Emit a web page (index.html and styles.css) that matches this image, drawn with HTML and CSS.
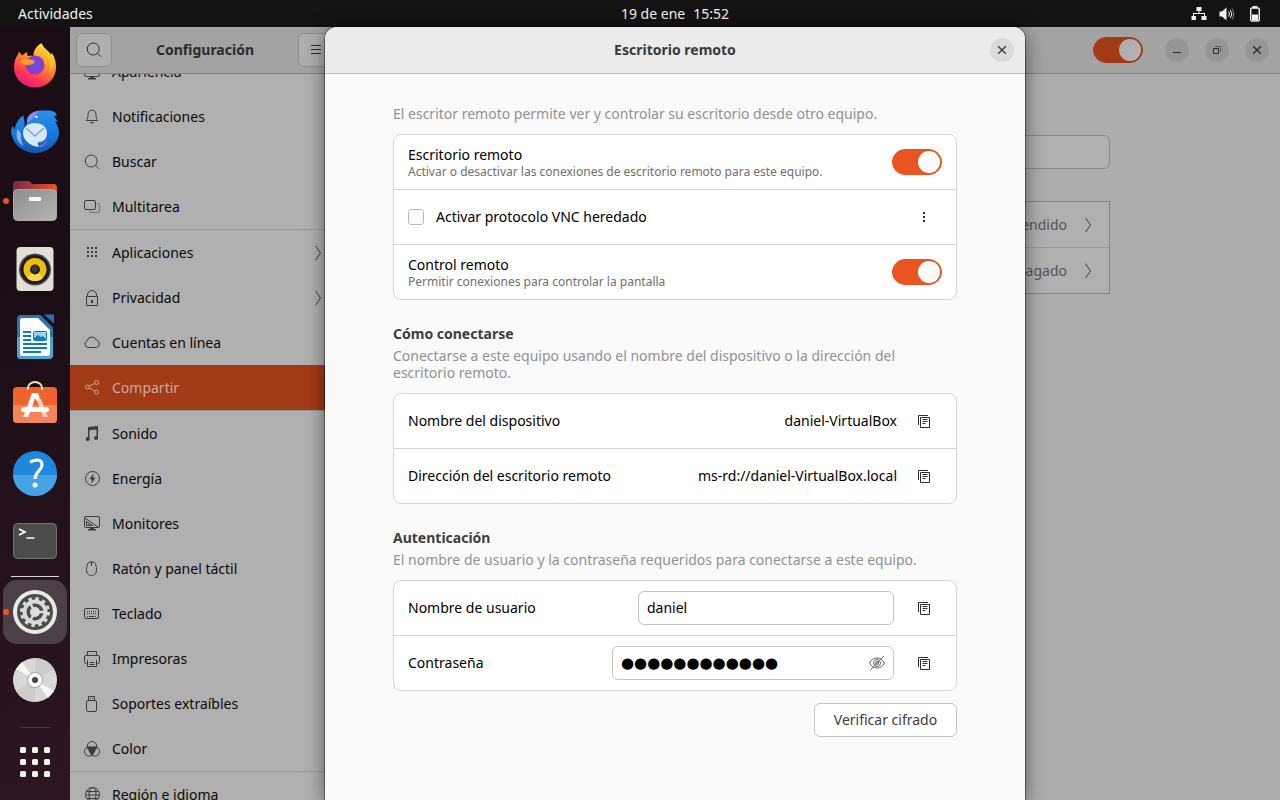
FILE: index.html
```html
<!DOCTYPE html>
<html lang="es">
<head>
<meta charset="utf-8">
<title>Configuración</title>
<link rel="stylesheet" href="styles.css">
</head>
<body>
<svg class="defs" aria-hidden="true">
  <symbol id="i-search" viewBox="0 0 16 16"><circle cx="7.2" cy="7" r="6"/><path d="M11.4 11.2l3.6 3.6"/></symbol>
  <symbol id="i-chevron" viewBox="0 0 8 16"><path d="M1.500 .8L6.500 8l-5 7.200"/></symbol>
  <symbol id="i-close" viewBox="0 0 16 16"><path stroke-width="1.400" d="M4.200 4.200l7.600 7.600M11.800 4.200l-7.600 7.600"/></symbol>
  <symbol id="i-copy" viewBox="0 0 16 16"><path d="M2.500 12V2.500H12M4.500 4.500h9v10h-9zM6.500 6.500h5M6.500 8.500h5M6.500 10.500h3"/></symbol>
</svg>

<header class="topbar">
  <button class="activities">Actividades</button>
  <button class="clock"><span>19 de ene</span><span>15:52</span></button>
  <div class="tray">
    <svg class="icon tray-icon" viewBox="0 0 16 16"><path class="fill" d="M5.500 1h5v4h-2v2H14v3h1.500v4h-5v-4H13V8H3v2h2v4H.500v-4H2V7h5.500V5h-2z"/></svg>
    <svg class="icon tray-icon" viewBox="0 0 16 16"><path class="fill" d="M.5 5.500h2.500L7.500 1.500v13L3 10.500H.500z"/><path d="M9.500 5.500q2 2.500 0 5M11.300 4q3 4 0 8"/><path class="faint" d="M13 2.500q3.500 5.500 0 11"/></svg>
    <svg class="icon tray-icon" viewBox="0 0 16 16"><rect class="bold-stroke" x="3.700" y="2" width="8.600" height="13" rx="1.500"/><path class="fill" d="M5.500 0h5v2h-5zM5 8.500h6V14H5z"/></svg>
  </div>
</header>

<main class="desktop">
  <nav class="dock" aria-label="Aplicaciones favoritas">
    <div class="dock-apps">
      <button class="app" aria-label="Firefox">
        <svg viewBox="0 0 48 48"><defs><linearGradient id="fx" x1=".8" y1="0" x2=".3" y2="1"><stop offset="0" stop-color="#fff14a"/><stop offset=".4" stop-color="#ff9a26"/><stop offset=".75" stop-color="#ff3a4e"/><stop offset="1" stop-color="#e5188a"/></linearGradient><radialGradient id="fp"><stop offset="0" stop-color="#5b58d8"/><stop offset="1" stop-color="#9238d0"/></radialGradient></defs>
        <path fill="url(#fx)" d="M30.500 2c1 3 4 6 7 8.500l2.500 3 1-1.500c3 5 4 9 4 14.500a21 20 0 0 1-42 0c0-5 1.500-10 4-13l1-3 3 4 5-3.500.5 4c2.500-.500 4-.500 6 0 0-6 3-10 8-13z"/><path fill="#ffc22b" d="M33 14c6 4 8 10 5 16 4-3 5-9 3-14l-8-8z"/><circle cx="24" cy="24" r="9.500" fill="url(#fp)"/><path fill="#ff9f20" d="M9 20c4-3 9-2 15 0-1 3-4 4-7 4-3 0-5-1-8-4z"/></svg>
      </button>
      <button class="app" aria-label="Thunderbird">
        <svg viewBox="0 0 48 48"><defs><linearGradient id="tb" x1="0" y1="0" x2="0" y2="1"><stop offset="0" stop-color="#2e8cf0"/><stop offset=".6" stop-color="#1479dc"/><stop offset="1" stop-color="#1454a8"/></linearGradient></defs>
        <path fill="url(#tb)" d="M17 12c2-7 7-10.500 13-10.500 5 0 9-.5 14 1.500l2 3.500-3 .5 4 6-3-1c3 5 4 9 4 13a24 22.500 0 0 1-47 2C-.5 23 0 19 2 17l1.500 4c1-6 4-12 9-14.500 0 4 2.500 8 .5 13z"/><path fill="#8b8cf5" d="M16 14c-1-6 4-12 12-12-4 3-4 8-12 12z"/><path fill="#8fb5f5" d="M7 20c-3 6-1 13 5 17-1-4-3-7-2-12z"/><circle cx="25.500" cy="8" r="1.300" fill="#fff"/><path fill="#6c63e0" d="M36 29c-1 4-4 7-8 7l1 3c5-1 8-5 7-10z"/><path fill="#d7e9fa" d="M24 14c7 0 12 4 12 10s-4 9-8 9c-2 1-1 3 0 5-9-1-16-7-16-14 0-6 5-10 12-10z"/><path fill="none" stroke="#7ea8cf" stroke-width="1.500" d="M15 19l9 8 9-8"/></svg>
      </button>
      <button class="app running" aria-label="Archivos">
        <svg viewBox="0 0 48 48"><defs><linearGradient id="fo" x1="0" x2="1"><stop offset="0" stop-color="#762a50"/><stop offset="1" stop-color="#e95420"/></linearGradient><linearGradient id="fg" x1="0" y1="0" x2="1" y2="1"><stop offset="0" stop-color="#8d8d8d"/><stop offset="1" stop-color="#b5b5b5"/></linearGradient></defs><path fill="url(#fo)" d="M2 8q0-4 4-4h11q2 0 3 2l1 1h22q3 0 3 4v8H2z"/><rect x="2.500" y="12.500" width="43" height="31" rx="4" fill="url(#fg)" stroke="#aaa"/><rect x="18" y="20" width="12" height="4" rx="1" fill="#f7f7f7"/></svg>
      </button>
      <button class="app" aria-label="Rhythmbox">
        <svg viewBox="0 0 48 48"><rect x="5.500" y="2" width="37" height="44" rx="4" fill="#e2dfd4"/><circle cx="24" cy="24.500" r="16" fill="#4a4954"/><circle cx="24" cy="24.500" r="14.500" fill="#1d1c26"/><circle cx="24" cy="24.500" r="11.500" fill="#f1bc10"/><path fill="#ffd84a" d="M16 32.700a11.500 11.500 0 0 0 16 0L24 24.500z"/><circle cx="24" cy="24.500" r="5" fill="#222"/><circle cx="24" cy="24" r="3" fill="#3a3a3a"/></svg>
      </button>
      <button class="app" aria-label="LibreOffice Writer">
        <svg viewBox="0 0 48 48"><path fill="#2377b4" d="M9.500 2h20L42 14.500V42q0 4-4 4H10q-4 0-4-4V6q0-4 3.500-4z"/><path fill="#49a5d5" d="M6 24h36v18q0 4-4 4H10q-4 0-4-4z"/><path fill="#fff" d="M11 5h16l12 12v24q0 2-2 2H11q-2 0-2-2V7q0-2 2-2z"/><path fill="#1f76b2" d="M33 1.500h10v9z"/><path fill="none" stroke="#0e7cc0" stroke-width="2" d="M12 19h8M12 23h8M12 27h8M12 31h24M12 35h24M12 39h18"/><rect x="22.500" y="18.500" width="13" height="9" rx="1" fill="#9bd0ef" stroke="#0e7cc0"/><path fill="#0e7cc0" d="M23 27v-2l4-3 3 2 2-1 3 3v1z"/></svg>
      </button>
      <button class="app" aria-label="Ubuntu Software">
        <svg viewBox="0 0 48 48"><rect x="2" y="6" width="44" height="36" rx="4" fill="#f0632c"/><path fill="#f3855a" d="M2 24h44v14q0 4-4 4H6q-4 0-4-4z"/><path fill="none" stroke="#fbdcae" stroke-width="2" d="M17 9V7a7 6 0 0 1 14 0v2"/><path fill="#fff" d="M21 12h6l2 6-3.500 2L24 17l-3 9h-5z"/><path fill="#f9d5c6" d="M26 19l4-1 7 18h-5z"/><path fill="#fff" d="M14 31h5l-2 5h-5z"/><rect x="10" y="26" width="28" height="5" rx="2.500" fill="#fff"/></svg>
      </button>
      <button class="app" aria-label="Ayuda">
        <svg viewBox="0 0 48 48"><circle cx="24" cy="24" r="22" fill="#2088dc"/><path fill="#46a4e6" d="M2 26a22 21 0 0 0 44 0z"/><path fill="none" stroke="#fff" stroke-width="3" d="M19 13q12-5 12 3c0 6-7 6-7 14"/><circle cx="24" cy="36" r="2.500" fill="#fff"/></svg>
      </button>
      <button class="app" aria-label="Terminal">
        <svg viewBox="0 0 48 48"><rect x="2.500" y="6.500" width="43" height="35" rx="4" fill="#4b4b4b" stroke="#737373"/><path fill="none" stroke="#fff" stroke-width="1.700" d="M8 12l6 3-6 3M15.500 21h8"/></svg>
      </button>
      <hr class="dock-line">
      <button class="app running active" aria-label="Configuración">
        <svg viewBox="0 0 48 48"><circle cx="24" cy="24" r="22" fill="#e9e9e9"/><circle cx="24" cy="24" r="18" fill="#4b4b4b"/><circle cx="24" cy="24" r="13.500" fill="none" stroke="#dadada" stroke-width="3" stroke-dasharray="3.534 3.534"/><circle cx="24" cy="24" r="10.500" fill="none" stroke="#dadada" stroke-width="4"/><path stroke="#dadada" stroke-width="2.500" d="M24 24h10M24 24l-5-9M24 24l-5 9"/><circle cx="24" cy="24" r="5" fill="#dedede"/></svg>
      </button>
      <button class="app" aria-label="Disco óptico">
        <svg viewBox="0 0 48 48"><circle cx="24" cy="24" r="22" fill="#d8d8d8"/><path fill="#cccccc" d="M24 24V2a22 22 0 0 1 19 11zM24 24v22a22 22 0 0 1-19-11z"/><path fill="#f7f7f7" d="M24 24L5 13l6-7zM24 24l19 11-6 7z"/><circle cx="24" cy="24" r="7.500" fill="#f8f8f8" stroke="#aaa18f"/><circle cx="24" cy="24" r="3" fill="#444"/></svg>
      </button>
      <button class="app" aria-label="Papelera">
        <svg viewBox="0 0 48 48"><rect x="7" y="3" width="34" height="43" rx="4" fill="#4a3843"/></svg>
      </button>
    </div>
    <button class="app" aria-label="Mostrar aplicaciones">
      <svg viewBox="0 0 48 48"><g fill="#f2f2f0"><rect x="9" y="9" width="6" height="6" rx="1.500"/><rect x="21" y="9" width="6" height="6" rx="1.500"/><rect x="33" y="9" width="6" height="6" rx="1.500"/><rect x="9" y="21" width="6" height="6" rx="1.500"/><rect x="21" y="21" width="6" height="6" rx="1.500"/><rect x="33" y="21" width="6" height="6" rx="1.500"/><rect x="9" y="33" width="6" height="6" rx="1.500"/><rect x="21" y="33" width="6" height="6" rx="1.500"/><rect x="33" y="33" width="6" height="6" rx="1.500"/></g></svg>
    </button>
  </nav>

  <div class="workspace">
    <section class="window">
      <aside class="sidebar">
        <header class="bar side-bar">
          <button class="tool" aria-label="Buscar"><svg class="icon"><use href="#i-search"/></svg></button>
          <h1 class="title">Configuración</h1>
          <button class="tool" aria-label="Menú"><svg class="icon" viewBox="0 0 16 16"><path d="M3 3.500h10M3 7.500h10M3 11.500h10"/></svg></button>
        </header>
        <div class="scroller">
          <ul class="panels">
            <li><a class="panel" href="#"><svg class="icon" viewBox="0 0 16 16"><rect x=".5" y="2.500" width="15" height="10" rx="1.500"/><path class="fill" d="M6 12h4v2h2v1.500H4V14h2z"/></svg>Apariencia</a></li>
            <li><a class="panel" href="#"><svg class="icon" viewBox="0 0 16 16"><path d="M8 1.200c-2.500 0-4 2-4 4.300 0 3-.5 4.500-1.800 6h11.600C12.500 10 12 8.500 12 5.500c0-2.300-1.500-4.300-4-4.300z"/><path class="fill" d="M6 13h4q-2 3-4 0z"/></svg>Notificaciones</a></li>
            <li><a class="panel" href="#"><svg class="icon"><use href="#i-search"/></svg>Buscar</a></li>
            <li><a class="panel" href="#"><svg class="icon" viewBox="0 0 16 16"><rect x=".5" y="1.500" width="11" height="9" rx="1.500"/><path class="faint" d="M13 4.500h1q1.500 0 1.500 1.500v6q0 1.500-1.500 1.500H7q-1.500 0-1.500-1.500"/></svg>Multitarea</a></li>
            <li class="group"><a class="panel" href="#"><svg class="icon" viewBox="0 0 16 16"><path class="fill" d="M3 2h2v2H3zM7 2h2v2H7zM11 2h2v2h-2zM3 6h2v2H3zM7 6h2v2H7zM11 6h2v2h-2zM3 10h2v2H3zM7 10h2v2H7zM11 10h2v2h-2z"/></svg>Aplicaciones<svg class="chevron"><use href="#i-chevron"/></svg></a></li>
            <li><a class="panel" href="#"><svg class="icon" viewBox="0 0 16 16"><path d="M2.500 6.500h11v9h-11zM3.500 6.500V5a4.500 4.500 0 0 1 9 0v1.500"/><path class="fill" d="M7 10h2v3H7z"/></svg>Privacidad<svg class="chevron"><use href="#i-chevron"/></svg></a></li>
            <li><a class="panel" href="#"><svg class="icon" viewBox="0 0 16 16"><path d="M4 12.500a3.500 3.500 0 0 1-.8-6.700 4.700 4.700 0 0 1 9-.8 3.800 3.800 0 0 1 0 7.500z"/></svg>Cuentas en línea</a></li>
            <li><a class="panel selected" href="#" aria-current="page"><svg class="icon" viewBox="0 0 16 16"><circle cx="3.500" cy="7" r="2"/><circle cx="12.500" cy="2.500" r="2"/><circle cx="12.500" cy="12" r="2"/><path d="M5.400 6.200l5.200-2.800M5.400 8l5.200 3"/></svg>Compartir</a></li>
            <li class="group"><a class="panel" href="#"><svg class="icon" viewBox="0 0 16 16"><path class="fill" d="M4 1L14 0v12h-1.500V3.500L5.500 4.200V13.500H4z"/><circle class="fill" cx="3.700" cy="13" r="2"/><circle class="fill" cx="12" cy="12" r="2"/></svg>Sonido</a></li>
            <li><a class="panel" href="#"><svg class="icon" viewBox="0 0 16 16"><circle cx="8.500" cy="7.500" r="7"/><path class="fill" d="M9.500 2.500L5.500 8.300h2.400l-.5 4.200 4-5.800H9z"/></svg>Energía</a></li>
            <li><a class="panel" href="#"><svg class="icon" viewBox="0 0 16 16"><rect x=".5" y=".5" width="15" height="11" rx="1.500"/><path d="M1 2l13 9M2.500 5.500v4h6zM4 8h1.500"/><path class="fill" d="M6 11.500h4V13h2v1.500H4V13h2z"/></svg>Monitores</a></li>
            <li><a class="panel" href="#"><svg class="icon" viewBox="0 0 16 16"><path d="M4.500 1.500q3-1.500 6 0c1 1 2 4 2 7 0 4-2 6-5 6s-5-2-5-6c0-3 1-6 2-7zM7.500 1v4"/></svg>Ratón y panel táctil</a></li>
            <li><a class="panel" href="#"><svg class="icon" viewBox="0 0 16 16"><rect x=".5" y="2.500" width="14" height="10" rx="1.500"/><path class="dots" d="M3 5.500h10M3 7.500h10"/><path d="M3 10.500h1M5 10.500h5M11 10.500h1"/></svg>Teclado</a></li>
            <li><a class="panel" href="#"><svg class="icon" viewBox="0 0 16 16"><path d="M3.500 4V.5h9V4M3.500 12.500h-1q-2 0-2-2V6q0-1.500 1.500-1.500h12q1.500 0 1.500 1.500v4.500q0 2-2 2h-1M3.500 9v6.500h9V9M5.500 11.500h5M5.500 13.500h5"/></svg>Impresoras</a></li>
            <li><a class="panel" href="#"><svg class="icon" viewBox="0 0 16 16"><rect x="2.500" y="4.500" width="10" height="11" rx="1.500"/><path d="M4.500 4V.5h6V4M6 2.500h1M8 2.500h1"/></svg>Soportes extraíbles</a></li>
            <li><a class="panel" href="#"><svg class="icon" viewBox="0 0 16 16"><circle cx="8" cy="5.200" r="4.700"/><circle cx="5.200" cy="10.500" r="4.700"/><circle cx="10.800" cy="10.500" r="4.700"/><path class="fill" d="M3.500 6.500Q8 4.500 12.500 6.500L11 10.500 8 14l-3-3.500z"/></svg>Color</a></li>
            <li class="group"><a class="panel" href="#"><svg class="icon" viewBox="0 0 16 16"><circle cx="8.500" cy="7.500" r="7"/><ellipse cx="8.500" cy="7.500" rx="3.500" ry="7"/><path d="M2.500 4.500h12M1.500 8h14M2.500 11.500h12"/></svg>Región e idioma</a></li>
          </ul>
        </div>
      </aside>

      <div class="content">
        <header class="bar content-bar">
          <input class="switch" type="checkbox" role="switch" checked aria-label="Compartir">
          <div class="window-controls">
            <button class="round" aria-label="Minimizar"><svg class="icon" viewBox="0 0 16 16"><path d="M4 10.500h8"/></svg></button>
            <button class="round" aria-label="Restaurar"><svg class="icon" viewBox="0 0 16 16"><path d="M4.500 6.500h5v5h-5z"/><path class="faint" d="M6 4.500h5.500V10"/></svg></button>
            <button class="round" aria-label="Cerrar"><svg class="icon"><use href="#i-close"/></svg></button>
          </div>
        </header>
        <div class="sharing">
          <input class="device-name" type="text" aria-label="Nombre del equipo">
          <ul class="services">
            <li><a class="service" href="#">Encendido<svg class="chevron"><use href="#i-chevron"/></svg></a></li>
            <li><a class="service" href="#">Apagado<svg class="chevron"><use href="#i-chevron"/></svg></a></li>
          </ul>
        </div>
      </div>
    </section>

    <section class="dialog" role="dialog" aria-labelledby="dialog-title">
      <header class="bar dialog-bar">
        <h2 class="title" id="dialog-title">Escritorio remoto</h2>
        <button class="round" aria-label="Cerrar"><svg class="icon"><use href="#i-close"/></svg></button>
      </header>
      <div class="dialog-body">
        <section class="block">
          <p class="hint">El escritor remoto permite ver y controlar su escritorio desde otro equipo.</p>
          <div class="card">
            <div class="row">
              <label class="row-text" for="rd">Escritorio remoto<small>Activar o desactivar las conexiones de escritorio remoto para este equipo.</small></label>
              <input class="switch" id="rd" type="checkbox" role="switch" checked>
            </div>
            <div class="row">
              <label class="row-check"><input class="check" type="checkbox">Activar protocolo VNC heredado</label>
              <button class="ghost" aria-label="Más opciones"><svg class="icon" viewBox="0 0 16 16"><path class="fill" d="M7 3h2v2H7zM7 7h2v2H7zM7 11h2v2H7z"/></svg></button>
            </div>
            <div class="row">
              <label class="row-text" for="rc">Control remoto<small>Permitir conexiones para controlar la pantalla</small></label>
              <input class="switch" id="rc" type="checkbox" role="switch" checked>
            </div>
          </div>
        </section>

        <section class="block">
          <h3 class="heading">Cómo conectarse</h3>
          <p class="hint">Conectarse a este equipo usando el nombre del dispositivo o la dirección del escritorio remoto.</p>
          <div class="card">
            <div class="row">
              <span>Nombre del dispositivo</span>
              <span class="value">daniel-VirtualBox</span>
              <button class="ghost" aria-label="Copiar"><svg class="icon"><use href="#i-copy"/></svg></button>
            </div>
            <div class="row">
              <span>Dirección del escritorio remoto</span>
              <span class="value">ms-rd://daniel-VirtualBox.local</span>
              <button class="ghost" aria-label="Copiar"><svg class="icon"><use href="#i-copy"/></svg></button>
            </div>
          </div>
        </section>

        <section class="block">
          <h3 class="heading">Autenticación</h3>
          <p class="hint">El nombre de usuario y la contraseña requeridos para conectarse a este equipo.</p>
          <div class="card">
            <div class="row">
              <label for="user">Nombre de usuario</label>
              <span class="field user-field"><input id="user" type="text" value="daniel"></span>
              <button class="ghost" aria-label="Copiar"><svg class="icon"><use href="#i-copy"/></svg></button>
            </div>
            <div class="row">
              <label for="pass">Contraseña</label>
              <span class="field pass-field"><input class="secret" id="pass" type="text" value="●●●●●●●●●●●●">
                <button class="reveal" aria-label="Mostrar contraseña"><svg class="icon" viewBox="0 0 16 16"><path d="M.6 8Q3 3 8 3t7.400 5Q13 13 8 13T.6 8zM14.800 1L1.500 15"/><circle cx="8" cy="8" r="3.500"/><circle cx="8" cy="8" r="1.500"/></svg></button></span>
              <button class="ghost" aria-label="Copiar"><svg class="icon"><use href="#i-copy"/></svg></button>
            </div>
          </div>
          <button class="verify">Verificar cifrado</button>
        </section>
      </div>
    </section>
  </div>
</main>
</body>
</html>
```
FILE: styles.css
```css
* { box-sizing: border-box; }

html, body { height: 100%; }

body {
  margin: 0;
  display: flex;
  flex-direction: column;
  overflow: hidden;
  background: #1e0f18;
  color: #000;
  font: 14px/17px "Noto Sans", "Open Sans", sans-serif;
}

h1, h2, h3, p, ul { margin: 0; padding: 0; }
ul { list-style: none; }
a { color: inherit; text-decoration: none; }

button {
  margin: 0;
  padding: 0;
  border: 0;
  background: none;
  color: inherit;
  font: inherit;
}

.defs { position: absolute; width: 0; height: 0; }

.icon {
  display: block;
  flex: none;
  width: 16px;
  height: 16px;
  fill: none;
  stroke: currentColor;
  stroke-width: 1;
}

.icon .fill { fill: currentColor; stroke: none; }
.icon .faint { opacity: .5; }
.icon .dots { stroke-dasharray: 1 1; }
.icon .bold-stroke { stroke-width: 1.4; }

.chevron {
  flex: none;
  width: 8px;
  height: 16px;
  margin-left: auto;
  fill: none;
  stroke: #3c3c3c;
}

/* Top bar */
.topbar {
  flex: none;
  display: grid;
  grid-template-columns: 70px 1fr auto 1fr;
  align-items: center;
  height: 27px;
  background: #131313;
  color: #f2f2f2;
}

.activities { grid-column: 1 / 3; justify-self: start; padding-left: 18px; }
.clock { display: flex; gap: 8px; }
.tray { display: flex; justify-content: flex-end; gap: 12px; padding-right: 17px; }

/* Dock */
.desktop { flex: 1; min-height: 0; display: flex; }

.dock {
  flex: none;
  display: flex;
  flex-direction: column;
  width: 70px;
  padding: 6px 3px;
  background: linear-gradient(165deg, #1a0d15 30%, #2c1622);
}

.dock-apps {
  flex: 1;
  min-height: 0;
  display: flex;
  flex-direction: column;
  gap: 4px;
  overflow: hidden;
  margin-bottom: 2px;
}

.app {
  flex: none;
  display: grid;
  place-items: center;
  width: 64px;
  height: 64px;
  border-radius: 14px;
}

.app svg { display: block; width: 48px; height: 48px; }
.app.active { background: #4d3f48; }

.app.running::before {
  content: "";
  grid-area: 1 / 1;
  justify-self: start;
  width: 6px;
  height: 6px;
  border-radius: 50%;
  background: #e95420;
}

.app.running svg { grid-area: 1 / 1; }

.dock-line {
  flex: none;
  width: 48px;
  height: 1px;
  margin: -1px auto;
  border: 0;
  background: #d8d3d6;
}

/* Settings window, dimmed behind the dialog */
.workspace { position: relative; flex: 1; min-width: 0; }
.window { display: flex; height: 100%; background: #adadad; color: #0a0a0a; }

.bar {
  flex: none;
  display: flex;
  align-items: center;
  height: 47px;
  border-bottom: 1px solid #848484;
  background: #a3a3a3;
  color: #2b2b2b;
}

.title { flex: 1; font-size: 14px; line-height: 18px; text-align: center; }

.sidebar {
  flex: none;
  display: flex;
  flex-direction: column;
  width: 270px;
  border-right: 1px solid #929292;
  background: #b0b0b0;
}

.side-bar { width: 270px; padding: 0 6px; }

.tool {
  display: grid;
  place-items: center;
  width: 36px;
  height: 34px;
  border: 1px solid #8e8e8e;
  border-radius: 6px;
  background: #afafaf;
}

.scroller { flex: 1; min-height: 0; overflow: hidden; }

/* The list is scrolled part of the way past its first entry */
.panels { margin-top: -25px; }

.panel {
  display: flex;
  align-items: center;
  gap: 12px;
  height: 45px;
  padding: 0 17px 0 14px;
}

.panel .icon { color: #3a3a3a; }
.group { border-top: 1px solid #999; }
.panel.selected, .panel.selected .icon { color: #c9aca2; }
.panel.selected { background: #a33a17; }

.content { flex: 1; min-width: 0; }
.content-bar { justify-content: flex-end; gap: 22px; padding-right: 11px; }
.window-controls { display: flex; gap: 16px; }

.round {
  display: grid;
  place-items: center;
  width: 24px;
  height: 24px;
  border-radius: 50%;
  background: #969696;
}

.switch {
  appearance: none;
  flex: none;
  display: flex;
  justify-content: flex-end;
  width: 50px;
  height: 26px;
  margin: 0;
  padding: 1px;
  border: 1px solid #e95420;
  border-radius: 13px;
  background: #e95420;
}

.switch::before {
  content: "";
  width: 22px;
  height: 22px;
  border-radius: 50%;
  background: #fcfcfc;
}

.content-bar .switch { border-color: #a33a17; background: #a33a17; }
.content-bar .switch::before { background: #b0b0b0; }

.sharing {
  display: flex;
  flex-direction: column;
  gap: 32px;
  max-width: 600px;
  margin: 0 auto;
  padding-top: 61px;
}

.device-name {
  width: 100%;
  height: 34px;
  border: 1px solid #8a8a8a;
  border-radius: 6px;
  background: #b0b0b0;
}

.services { border: 1px solid #858585; background: #b0b0b0; }
.services li + li { border-top: 1px solid #999; }

.service {
  display: flex;
  align-items: center;
  justify-content: flex-end;
  gap: 17px;
  height: 45px;
  padding-right: 17px;
  color: #555;
}

.service .chevron { margin: 0; }

/* Dialog */
.dialog {
  position: absolute;
  inset: 0;
  width: 700px;
  max-width: 100%;
  margin: 0 auto;
  overflow: hidden;
  border-radius: 12px 12px 0 0;
  background: #fafafa;
  color: #000;
  box-shadow: 0 0 0 1px rgba(0, 0, 0, .4), 0 4px 20px rgba(0, 0, 0, .5);
}

.dialog-bar {
  padding: 0 11px;
  border-bottom-color: #bdbdbd;
  background: #ebebeb;
  color: #3a3a3a;
}

.dialog-bar .title { padding-left: 24px; }
.dialog-bar .round { background: #dadada; }

.dialog-body {
  display: flex;
  flex-direction: column;
  gap: 25px;
  padding: 31px 68px;
}

.block { display: flex; flex-direction: column; }
.heading { margin-bottom: 5px; color: #3d3d3d; font-size: 14px; line-height: 17px; }
.hint { margin-bottom: 12px; color: #929292; }

.card {
  overflow: hidden;
  border: 1px solid #d5d5d5;
  border-radius: 8px;
  background: #fff;
}

.row { display: flex; align-items: center; height: 54px; padding: 0 14px; line-height: 18px; }
.row + .row { height: 55px; border-top: 1px solid #d5d5d5; }
.row-text { flex: 1; display: flex; flex-direction: column; }
.row-text small { color: #707070; font-size: 12px; line-height: 15px; }
.row-check { flex: 1; display: flex; align-items: center; gap: 12px; }

.check {
  appearance: none;
  width: 16px;
  height: 16px;
  margin: 0;
  border: 1px solid #b8b8b8;
  border-radius: 3px;
  background: #fff;
}

.value { margin: 0 9px 0 auto; }

.ghost {
  flex: none;
  display: grid;
  place-items: center;
  width: 36px;
  height: 34px;
  color: #2e2e2e;
}

.field {
  display: flex;
  align-items: center;
  height: 34px;
  margin: 0 12px 0 auto;
  padding: 0 8px;
  border: 1px solid #c4c4c4;
  border-radius: 6px;
}

.user-field { width: 256px; }
.pass-field { width: 282px; }

.field input {
  flex: 1;
  min-width: 0;
  padding: 0;
  border: 0;
  outline: 0;
  background: none;
  color: #000;
  font: inherit;
}

.field .secret { font: 15px/18px "DejaVu Sans", sans-serif; }
.reveal { color: #666; }

.verify {
  align-self: flex-end;
  min-width: 143px;
  height: 34px;
  margin-top: 12px;
  padding: 0 16px;
  border: 1px solid #c4c4c4;
  border-radius: 6px;
  background: #fff;
  color: #3d3d3d;
  line-height: 18px;
}
```
